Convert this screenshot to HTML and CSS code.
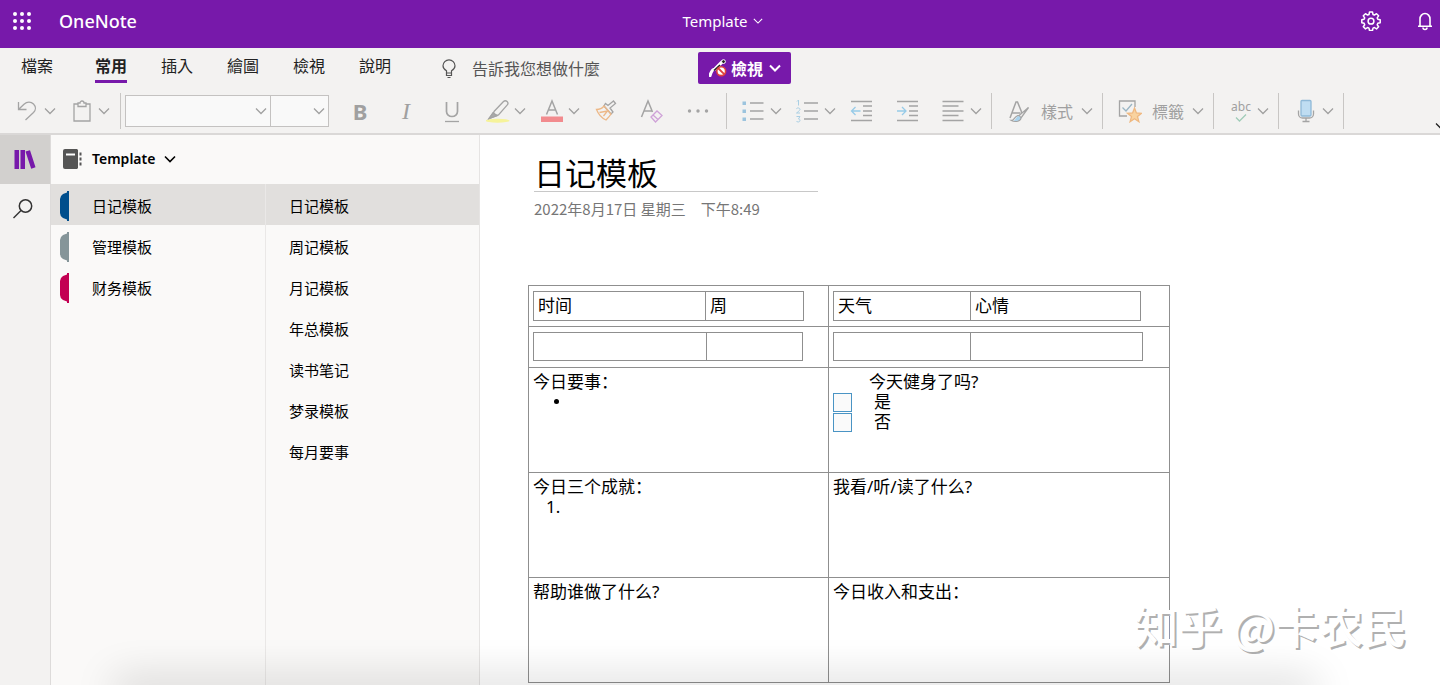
FILE: index.html
```html
<!DOCTYPE html>
<html lang="zh-Hant">
<head>
<meta charset="utf-8">
<title>OneNote</title>
<link rel="stylesheet" href="styles.css">
</head>
<body>
<svg class="defs" aria-hidden="true">
  <symbol id="chev" viewBox="0 0 12 12"><path d="M1 3.500l5 5 5-5" fill="none" stroke="currentColor"/></symbol>
</svg>
<div class="app">
  <header class="topbar">
    <button class="waffle" aria-label="Apps">
      <svg width="20" height="20" viewBox="0 0 20 20" fill="#fff"><circle cx="3" cy="3" r="2"/><circle cx="10" cy="3" r="2"/><circle cx="17" cy="3" r="2"/><circle cx="3" cy="10" r="2"/><circle cx="10" cy="10" r="2"/><circle cx="17" cy="10" r="2"/><circle cx="3" cy="17" r="2"/><circle cx="10" cy="17" r="2"/><circle cx="17" cy="17" r="2"/></svg>
    </button>
    <span class="brand">OneNote</span>
    <button class="doc-name">Template <svg class="chev small"><use href="#chev"/></svg></button>
    <div class="top-actions">
      <button aria-label="Settings">
        <svg width="20" height="20" viewBox="0 0 20 20" fill="none" stroke="#fff" stroke-width="1.500" stroke-linejoin="round"><path d="M8.500 1h3l.5 2.500 1.400.6 2.100-1.400 2.100 2.100-1.400 2.100.6 1.400 2.400.5v2.900l-2.400.6-.6 1.400 1.400 2-2.100 2.200-2.100-1.400-1.400.6-.5 2.400h-3L8 17.100l-1.400-.6-2.100 1.400-2.200-2.200 1.400-2-.6-1.400L.8 11.700V8.800l2.300-.5.6-1.400-1.400-2.100 2.200-2.100 2.100 1.400L8 3.500z"/><circle cx="10" cy="10.200" r="2.900"/></svg>
      </button>
      <button aria-label="Notifications">
        <svg width="16" height="20" viewBox="0 0 16 20" fill="none" stroke="#fff" stroke-width="1.600"><path d="M1 15.200h14M3 15V8a5 5.500 0 0 1 10 0v7"/><path d="M6 16.500a2 2 0 0 0 4 0"/></svg>
      </button>
    </div>
  </header>

  <div class="ribbon">
    <div class="tabs-row">
      <nav class="tabs">
        <button class="tab file">檔案</button>
        <button class="tab active">常用</button>
        <button class="tab">插入</button>
        <button class="tab">繪圖</button>
        <button class="tab">檢視</button>
        <button class="tab">說明</button>
      </nav>
      <label class="tellme">
        <svg width="16" height="20" viewBox="0 0 16 20" fill="none" stroke="#555" stroke-width="1.200"><path d="M5.500 14v-2.200C3.500 10.700 2 9 2 6.800a6 6 0 0 1 12 0c0 2.200-1.500 3.900-3.500 5V14zM5.500 14v2.500h5V14M6.500 18.500h3"/></svg>
        <input type="text" placeholder="告訴我您想做什麼" aria-label="告訴我您想做什麼">
      </label>
      <button class="mode">
        <svg width="18" height="18" viewBox="0 0 18 18"><path d="M1 16.500Q3 10 6 10L13 3" fill="none" stroke="#fff" stroke-width="3.200" stroke-linecap="round"/><path d="M5 11.500l6-5.500" stroke="#222" stroke-width="1.600"/><circle cx="14.500" cy="2.600" r="1.900" fill="#222" stroke="#fff"/><circle cx="12.200" cy="12.200" r="4.400" fill="#fff" stroke="#e0413e" stroke-width="1.600"/><path d="M9 9l6.400 6.400" stroke="#e0413e" stroke-width="1.800"/></svg>
        <span>檢視</span>
        <svg class="chev"><use href="#chev"/></svg>
      </button>
    </div>

    <div class="toolbar" role="toolbar" aria-label="常用">
      <button class="tool first" aria-label="復原"><svg class="ico" viewBox="0 0 24 24"><path d="M2.500 3v7.500h8M3 10L8 5.200c3-2.700 7-2.700 9.500-.2s2.500 6 0 8.500L9.500 21"/></svg><svg class="chev"><use href="#chev"/></svg></button>
      <button class="tool" aria-label="貼上"><svg class="ico" viewBox="0 0 24 24"><path d="M8 5H4v17h16V5h-4M8 7.500V4h2a2 2 0 0 1 4 0h2v3.500z"/></svg><svg class="chev"><use href="#chev"/></svg></button>
      <span class="sep first-sep"></span>
      <span class="combo family"><select aria-label="字型"><option></option></select><svg class="chev"><use href="#chev"/></svg></span>
      <span class="combo size"><select aria-label="字型大小"><option></option></select><svg class="chev"><use href="#chev"/></svg></span>
      <button class="tool after-combo" aria-label="粗體"><span class="glyph bold">B</span></button>
      <button class="tool lone" aria-label="斜體"><span class="glyph italic">I</span></button>
      <button class="tool lone" aria-label="底線"><svg class="ico" viewBox="0 0 24 24"><path d="M6.500 3v9.500a5.500 5 0 0 0 11 0V3" stroke-width="1.700"/><path d="M5 22.500h14"/></svg></button>
      <button class="tool lone" aria-label="醒目提示"><svg class="ico" viewBox="0 0 24 24"><ellipse cx="11.500" cy="21.700" rx="12" ry="2" fill="#f6f39a" stroke="none"/><path d="M8 12.500L17.500 2.500a2.500 2.500 0 0 1 3.600 3.600L12.500 16l-4 .5-1-1zM7 14l-3.500 5.500L11 16.500z"/><path d="M7 14l-4 5.500 8-3z" fill="#aaa"/></svg><svg class="chev"><use href="#chev"/></svg></button>
      <button class="tool" aria-label="字型色彩"><svg class="ico" viewBox="0 0 24 24"><path d="M6.500 15.500L12 2l5.500 13.500M8.300 11h7.400" stroke-width="1.500"/><path d="M1 17.500h22V23H1z" fill="#f28b8e" stroke="none"/></svg><svg class="chev"><use href="#chev"/></svg></button>
      <button class="tool" aria-label="複製格式"><svg class="ico" viewBox="0 0 24 24"><path d="M10 7l7 8 2-2-3-4 5.500-4.500-2-2.500L14 6.500l-2.500-2z"/><path d="M10 7c-2 2.500-4.500 3.500-7.500 3.500 2 5 5 8.500 9.500 10.500 1.500-1.500 3.500-3.500 5-6z" stroke="#edb887"/><path d="M5.500 13.500l8-1.500-4 5" stroke="#edb887"/></svg></button>
      <button class="tool lone" aria-label="清除格式"><svg class="ico" viewBox="0 0 24 24"><path d="M1.500 18L8 2l4.500 11M4 12h8" stroke-width="1.500"/><path d="M11 18l6-6 5 4.500-6.500 6.500zM13 16l5 4.500" stroke="#cfa3d8"/></svg></button>
      <button class="tool lone" aria-label="更多"><svg class="ico" viewBox="0 0 24 24"><g fill="#a4a4a4" stroke="none"><circle cx="3.500" cy="12" r="1.700"/><circle cx="12" cy="12" r="1.700"/><circle cx="20.500" cy="12" r="1.700"/></g></svg></button>
      <span class="sep wide"></span>
      <button class="tool" aria-label="項目符號"><svg class="ico" viewBox="0 0 24 24"><path d="M8 4H21.500M8 12H21.500M8 20H21.500"/><path d="M.5 2.500H4V6H.5zM.5 10.500H4V14H.5zM.5 18.500H4V22H.5z" fill="#9cc4de" stroke="none"/></svg><svg class="chev"><use href="#chev"/></svg></button>
      <button class="tool" aria-label="編號"><svg class="ico" viewBox="0 0 24 24"><path d="M8 4H22M8 12H22M8 20H22"/><path d="M1 2.500L2.500 1v5.500M.5 10c0-1.500 3.500-1.500 3.500.5 0 1-3.500 3.500-3.500 3.500H4M.5 17.500H4L2.500 20c2 0 2 3-.3 3L.5 22.500" stroke="#a9cfe4" stroke-width="1"/></svg><svg class="chev"><use href="#chev"/></svg></button>
      <button class="tool" aria-label="減少縮排"><svg class="ico" viewBox="0 0 24 24"><path d="M1 2.500h21M13 7h9M13 12h9M13 16.500h9M1 21.500h21"/><path d="M10.500 12h-9M5.500 8l-4 4 4 4" stroke="#97cbe8"/></svg></button>
      <button class="tool lone" aria-label="增加縮排"><svg class="ico" viewBox="0 0 24 24"><path d="M1 2.500h21M13 7h9M13 12h9M13 16.500h9M1 21.500h21"/><path d="M1 12h9M6 8l4 4-4 4" stroke="#97cbe8"/></svg></button>
      <button class="tool lone" aria-label="對齊"><svg class="ico" viewBox="0 0 24 24"><path d="M.5 2.500h21M.5 7h16M.5 12h21M.5 16.500h16M.5 21.500h21"/></svg><svg class="chev"><use href="#chev"/></svg></button>
      <span class="sep"></span>
      <button class="tool"><svg class="ico" viewBox="0 0 24 24"><path d="M3 19L9 3h1.500L15 14M5.500 14h8" stroke-width="1.500"/><path d="M21.500 8.500L12 16.500l2 2.500zM4.500 21.500c3 0 3-5 7.500-5l2 2.500c-1 4-7 4-9.500 2.500z"/><path d="M6 21.500c3 0 3-4.500 6-4.500l1.500 2c-1 3-5 3.500-7.500 2.500z" fill="#a9d3ee" stroke="none"/></svg><span class="text">樣式</span><svg class="chev"><use href="#chev"/></svg></button>
      <span class="sep"></span>
      <button class="tool"><svg class="ico" viewBox="0 0 24 24"><path d="M9 17H1.500V2H17v6"/><path d="M4.500 8.500l3.500 3.500 6-7" stroke="#9ab5c4"/><path d="M16.500 9l1.900 5 5.100.3-4 3.300 1.400 5.100-4.400-2.900-4.400 2.900 1.400-5.100-4-3.300 5.100-.3z" fill="#f9d3a0" stroke="#efb880"/></svg><span class="text">標籤</span><svg class="chev"><use href="#chev"/></svg></button>
      <span class="sep"></span>
      <button class="tool" aria-label="拼字檢查"><span class="spell">abc<svg width="12" height="8" viewBox="0 0 12 8" fill="none" stroke="#a0ccb8" stroke-width="1.300"><path d="M1 3.500L4.500 7 11 .5"/></svg></span><svg class="chev"><use href="#chev"/></svg></button>
      <span class="sep"></span>
      <button class="tool" aria-label="聽寫"><svg class="ico" viewBox="0 0 24 24"><path d="M4.500 11.500v3.500a4 4 0 0 0 4 4h7a4 4 0 0 0 4-4v-3.500M12 19v3.500M8.500 22.500h7"/><rect x="7" y="1.500" width="10" height="15.500" rx="1" fill="#bfddf2" stroke="#8fb9d8"/></svg><svg class="chev"><use href="#chev"/></svg></button>
      <span class="sep"></span>
      <button class="collapse" aria-label="摺疊功能區"><svg class="chev"><use href="#chev"/></svg></button>
    </div>
  </div>

  <div class="body" lang="zh-Hans">
    <aside class="rail">
      <button class="rail-btn on" aria-label="笔记本"><svg width="24" height="20" viewBox="0 0 24 20" fill="#7719aa"><path d="M1.500 0H6v19H1.500zM7.500 0H12v19H7.500zM12.500 1.500L17 .2l5.500 17-4.300 1.500z"/></svg></button>
      <button class="rail-btn" aria-label="搜索"><svg width="22" height="22" viewBox="0 0 22 22" fill="none" stroke="#333" stroke-width="1.500"><circle cx="13.500" cy="8" r="6.200"/><path d="M9 12.500l-7.500 7.500"/></svg></button>
    </aside>
    <div class="panel">
      <button class="notebook">
        <svg width="20" height="20" viewBox="0 0 20 20"><path d="M2 0h12l1 1v18l-1 1H2a2 2 0 0 1-2-2V2a2 2 0 0 1 2-2z" fill="#555"/><path d="M3 5.500h9" stroke="#fff" stroke-width="2"/><path d="M17.500 3.500v14" stroke="#555" stroke-width="2" stroke-dasharray="3 2"/></svg>
        <span>Template</span><svg class="chev"><use href="#chev"/></svg>
      </button>
      <div class="lists">
        <ul class="sections">
          <li><button class="row on"><svg class="mark blue" viewBox="0 0 10 30"><path d="M7 0h2v30H7v-1.500L3 27q-3-2-3-5V8q0-3 3-5l4-1.500z"/></svg>日记模板</button></li>
          <li><button class="row"><svg class="mark grey" viewBox="0 0 10 30"><path d="M7 0h2v30H7v-1.500L3 27q-3-2-3-5V8q0-3 3-5l4-1.500z"/></svg>管理模板</button></li>
          <li><button class="row"><svg class="mark red" viewBox="0 0 10 30"><path d="M7 0h2v30H7v-1.500L3 27q-3-2-3-5V8q0-3 3-5l4-1.500z"/></svg>财务模板</button></li>
        </ul>
        <ul class="pages">
          <li><button class="row on">日记模板</button></li>
          <li><button class="row">周记模板</button></li>
          <li><button class="row">月记模板</button></li>
          <li><button class="row">年总模板</button></li>
          <li><button class="row">读书笔记</button></li>
          <li><button class="row">梦录模板</button></li>
          <li><button class="row">每月要事</button></li>
        </ul>
      </div>
    </div>
    <main class="page">
      <h1>日记模板</h1>
      <p class="date"><span>2022年8月17日 星期三</span><span>下午8:49</span></p>
      <table class="grid">
        <tr class="short">
          <td class="left"><table class="inner"><tr><td class="c172">时间</td><td class="c98">周</td></tr></table></td>
          <td class="right"><table class="inner"><tr><td class="c137">天气</td><td class="c170">心情</td></tr></table></td>
        </tr>
        <tr class="short">
          <td><table class="inner"><tr><td class="c173"></td><td class="c96"></td></tr></table></td>
          <td><table class="inner"><tr><td class="c137"></td><td class="c172"></td></tr></table></td>
        </tr>
        <tr class="tall">
          <td>今日要事：<ul class="dots"><li></li></ul></td>
          <td><div class="question">今天健身了吗?</div>
            <label class="todo"><input type="checkbox">是</label>
            <label class="todo"><input type="checkbox">否</label></td>
        </tr>
        <tr class="tall"><td>今日三个成就：<div class="number">1.</div></td><td>我看/听/读了什么?</td></tr>
        <tr class="tall"><td>帮助谁做了什么?</td><td>今日收入和支出：</td></tr>
      </table>
    </main>
  </div>
  <div class="watermark" lang="zh-Hans">知乎 @卡农民</div>
  <div class="bottom-shade"></div>
</div>
</body>
</html>
```

FILE: styles.css
```css
* { box-sizing: border-box; }
body {
  margin: 0;
  font-family: "Noto Sans", "Noto Sans CJK TC", sans-serif;
  font-size: 16px;
  color: #222;
}
button {
  border: 0;
  padding: 0;
  background: none;
  font: inherit;
  color: inherit;
  display: flex;
  align-items: center;
}
ul { list-style: none; margin: 0; padding: 0; }
.defs { display: none; }
.app {
  position: relative;
  min-height: 100vh;
  display: flex;
  flex-direction: column;
  overflow: hidden;
}
.chev { width: 12px; height: 12px; flex: none; stroke-width: 1.3; }
.chev.small { width: 10px; height: 10px; }

/* Title bar */
.topbar {
  height: 48px;
  display: grid;
  grid-template-columns: 1fr auto 1fr;
  align-items: center;
  padding: 0 7px 7px 12px;
  background: #7719aa;
  color: #fff;
}
.waffle { grid-area: 1 / 1; justify-self: start; }
.brand {
  grid-area: 1 / 1;
  padding-left: 47px;
  font-size: 18px;
  font-weight: 500;
}
.doc-name { grid-area: 1 / 2; gap: 5px; font-size: 15px; }
.top-actions {
  grid-area: 1 / 3;
  justify-self: end;
  display: flex;
  gap: 36px;
}

/* Ribbon */
.ribbon {
  background: #f3f2f1;
  height: 87px;
  border-bottom: 2px solid #dad8d7;
}
.tabs-row {
  display: flex;
  align-items: flex-start;
  height: 40px;
  padding: 4px 0 0 21px;
}
.tabs { display: flex; gap: 34px; }
.tab {
  height: 31px;
  line-height: 28px;
  border-bottom: 3px solid transparent;
}
.tab.file { margin-right: 8px; }
.tab.active { font-weight: 700; border-color: #7719aa; }
.tellme {
  display: flex;
  align-items: center;
  gap: 15px;
  height: 33px;
  margin-left: 50px;
}
.tellme input {
  border: 0;
  padding: 0;
  width: 160px;
  background: none;
  font: inherit;
}
.tellme input::placeholder { color: #555; opacity: 1; }
.mode {
  margin-left: 66px;
  height: 32px;
  padding: 0 10px 0 11px;
  border-radius: 2px;
  background: #7719aa;
  color: #fff;
  font-weight: 700;
  gap: 4px;
}
.mode .chev { margin-left: 2px; stroke-width: 2; }
.toolbar {
  display: flex;
  align-items: center;
  height: 46px;
  color: #a0a0a0;
}
.tool { margin-left: 14px; gap: 4px; }
.tool.first { margin-left: 16px; }
.tool.lone { margin-left: 22px; }
.tool.after-combo { margin-left: 19px; }
.sep + .tool { margin-left: 15px; }
.ico {
  width: 24px;
  height: 24px;
  fill: none;
  stroke: #a4a4a4;
  stroke-width: 1.3;
}
.text { margin: 0 4px 0 6px; }
.glyph { width: 24px; text-align: center; font-size: 22px; line-height: 24px; }
.bold { font-weight: 700; }
.italic { font-family: "Liberation Serif", serif; font-style: italic; font-size: 24px; }
.spell {
  width: 24px;
  display: flex;
  flex-direction: column;
  align-items: center;
  font-size: 12px;
  line-height: 14px;
}
.sep { width: 1px; height: 36px; margin-left: 9px; background: #c8c6c4; }
.sep.first-sep { margin-left: 10px; }
.sep.wide { margin-left: 16px; }
.combo { position: relative; height: 32px; }
.combo select {
  appearance: none;
  width: 100%;
  height: 100%;
  border: 1px solid #c4c2c1;
  border-radius: 0;
  background: #f9f9f9;
}
.combo .chev { position: absolute; right: 4px; top: 10px; }
.combo.family { width: 146px; margin-left: 4px; }
.combo.size { width: 59px; margin-left: -1px; }
.collapse { margin: 30px -7px 0 auto; color: #222; }

/* Navigation */
.body {
  flex: 1;
  display: flex;
  font-family: "Noto Sans", "Noto Sans CJK SC", sans-serif;
  color: #000;
}
.rail { width: 51px; background: #f3f2f1; border-right: 1px solid #dddbda; }
.rail-btn { width: 50px; height: 49px; justify-content: center; padding-right: 4px; }
.rail-btn.on { background: #d2d0ce; padding: 0; }
.panel {
  width: 429px;
  display: flex;
  flex-direction: column;
  background: #faf9f8;
  border-right: 1px solid #e6e4e3;
  font-size: 15px;
}
.notebook {
  height: 49px;
  padding: 0 0 2px 12px;
  gap: 9px;
  font-size: 14px;
  font-weight: 600;
}
.notebook .chev { stroke-width: 1.6; }
.lists { flex: 1; display: flex; }
.sections { width: 215px; border-right: 1px solid #eae8e7; }
.pages { flex: 1; }
.row { width: 100%; height: 41px; padding-top: 2px; }
.row.on { background: #e1dfdd; }
.sections .row { padding-left: 9px; gap: 22px; }
.pages .row { padding-left: 23px; }
.mark { width: 10px; height: 30px; }
.blue { fill: #004e8c; }
.grey { fill: #859599; }
.red { fill: #c30052; }

/* Note page */
.page { flex: 1; min-width: 0; background: #fff; padding: 21px 48px 2px; }
h1 {
  margin: 0 0 0 6px;
  width: 284px;
  font-size: 31px;
  font-weight: 400;
  line-height: 35px;
  border-bottom: 1px solid #c8c8c8;
}
.date {
  display: flex;
  gap: 15px;
  margin: 7px 0 66px 6px;
  font-family: "Noto Sans CJK SC", sans-serif;
  font-size: 15px;
  line-height: 20px;
  color: #767676;
}
table { border-collapse: collapse; }
td { border: 1px solid #8f8f8f; vertical-align: top; padding: 5px 4px; }
.grid { font-size: 17px; line-height: 20px; }
.left { width: 300px; }
.right { width: 341px; }
.short { height: 41px; }
.tall { height: 105px; }
.tall td { padding-top: 4px; }
.inner td { height: 28px; padding: 4px; }
.c96 { width: 96px; }
.c98 { width: 98px; }
.c137 { width: 137px; }
.c170 { width: 170px; }
.c172 { width: 172px; }
.c173 { width: 173px; }
.dots { list-style: disc; padding-left: 37px; font-size: 13px; line-height: 18px; }
.number { padding-left: 13px; }
.question { padding-left: 36px; }
.todo { display: flex; align-items: center; gap: 22px; height: 20px; }
.todo input {
  appearance: none;
  margin: 0;
  width: 19px;
  height: 19px;
  border: 1px solid #4a94c4;
  background: #fafafa;
}

/* Overlays */
.watermark {
  position: absolute;
  right: 33px;
  bottom: 30px;
  font-family: "Noto Sans CJK SC", sans-serif;
  font-size: 44px;
  font-weight: 500;
  line-height: 60px;
  color: #fff;
  text-shadow: 2px 2px 0 #b0b0b0;
}
.bottom-shade {
  position: absolute;
  left: 120px;
  right: 130px;
  bottom: -10px;
  height: 10px;
  box-shadow: 0 0 40px 6px rgba(0, 0, 0, 0.18);
  pointer-events: none;
}
```
